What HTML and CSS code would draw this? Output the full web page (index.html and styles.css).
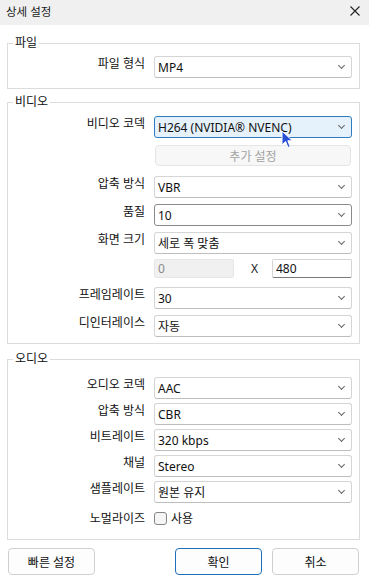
FILE: index.html
```html
<!DOCTYPE html>
<html lang="ko">

<head>
  <meta charset="UTF-8">
  <meta name="viewport" content="width=device-width, initial-scale=1.0">
  <title>상세 설정</title>
  <link rel="stylesheet" href="styles.css">
</head>

<body>
  <div class="window">
    <header class="titlebar">
      <span class="title">상세 설정</span>
      <svg class="close" width="10" height="10" viewBox="0 0 10 10">
        <path d="M0.5 0.5 L9.5 9.5 M9.5 0.5 L0.5 9.5" stroke="#222" stroke-width="1.1" fill="none" />
      </svg>
    </header>

    <!-- file -->
    <fieldset class="group group-file">
      <legend>파일</legend>
      <div class="rows">
        <label class="field-label">파일 형식</label>
        <div class="select"><span>MP4</span><i class="chevron"></i></div>
      </div>
    </fieldset>

    <!-- video -->
    <fieldset class="group group-video">
      <legend>비디오</legend>
      <div class="rows">
        <label class="field-label">비디오 코덱</label>
        <div class="select select-hot"><span>H264 (NVIDIA® NVENC)</span><i class="chevron"></i></div>

        <span></span>
        <button class="sub-button" disabled>추가 설정</button>

        <label class="field-label row-gap-lg">압축 방식</label>
        <div class="select row-gap-lg"><span>VBR</span><i class="chevron"></i></div>

        <label class="field-label">품질</label>
        <div class="select select-hover"><span>10</span><i class="chevron"></i></div>

        <label class="field-label">화면 크기</label>
        <div class="select"><span>세로 폭 맞춤</span><i class="chevron"></i></div>

        <span></span>
        <div class="size-row">
          <input class="text-input" type="text" value="0" disabled>
          <span class="times">X</span>
          <input class="text-input" type="text" value="480">
        </div>

        <label class="field-label row-gap-md">프레임레이트</label>
        <div class="select row-gap-md"><span>30</span><i class="chevron"></i></div>

        <label class="field-label">디인터레이스</label>
        <div class="select"><span>자동</span><i class="chevron"></i></div>
      </div>
    </fieldset>

    <!-- audio -->
    <fieldset class="group group-audio">
      <legend>오디오</legend>
      <div class="rows rows-tight">
        <label class="field-label">오디오 코덱</label>
        <div class="select"><span>AAC</span><i class="chevron"></i></div>

        <label class="field-label">압축 방식</label>
        <div class="select"><span>CBR</span><i class="chevron"></i></div>

        <label class="field-label">비트레이트</label>
        <div class="select"><span>320 kbps</span><i class="chevron"></i></div>

        <label class="field-label">채널</label>
        <div class="select"><span>Stereo</span><i class="chevron"></i></div>

        <label class="field-label">샘플레이트</label>
        <div class="select"><span>원본 유지</span><i class="chevron"></i></div>

        <label class="field-label check-label">노멀라이즈</label>
        <label class="check">
          <span class="box"></span>
          <span>사용</span>
        </label>
      </div>
    </fieldset>

    <footer class="buttons">
      <button class="btn">빠른 설정</button>
      <span class="spacer"></span>
      <button class="btn btn-default">확인</button>
      <button class="btn">취소</button>
    </footer>

    <svg class="cursor" width="13" height="19" viewBox="0 0 13 19">
      <path d="M1 1 L1 15 L4.5 11.5 L7 17.5 L9.2 16.6 L6.8 10.8 L11.5 10.8 Z" fill="#2b50d8" stroke="#fff" stroke-width="1" />
    </svg>
  </div>
</body>

</html>
```

FILE: styles.css
```css
body {
  margin: 0;
  background: #fff;
  font-family: "Noto Sans", "Noto Sans CJK KR", sans-serif;
  font-size: 12px;
  color: #111;
}

.window {
  position: relative;
  width: 369px;
  height: 581px;
  background: #fff;
}

/* title bar */
.titlebar {
  height: 25px;
  background: #f0f0f0;
  display: flex;
  align-items: center;
  justify-content: space-between;
  padding: 0 9px 0 6px;
  box-sizing: border-box;
}

.title {
  font-size: 11.5px;
  color: #1a1a1a;
  line-height: 14px;
  margin-top: -2px;
}

.close {
  margin-top: -4px;
}

/* groups */
.group {
  margin: 0 9px 0 7px;
  padding: 0;
  border: 1px solid #dcdcdc;
  min-width: 0;
}

.group legend {
  margin-left: 5px;
  padding: 0 2px;
  line-height: 14px;
  font-size: 12px;
  color: #111;
}

.group-file {
  margin-top: 11px;
  padding-top: 6px;
  padding-bottom: 10px;
}

.group-video {
  margin-top: 6px;
  padding-top: 7px;
  padding-bottom: 6px;
}

.group-audio {
  margin-top: 8px;
  padding-top: 11px;
  padding-bottom: 10px;
}

.rows {
  display: grid;
  grid-template-columns: 137px 198px;
  column-gap: 9px;
  row-gap: 6px;
}

.rows-tight {
  row-gap: 4px;
}

.row-gap-lg {
  margin-top: 4px;
}

.row-gap-md {
  margin-top: 3px;
}

.field-label {
  justify-self: end;
  line-height: 15px;
  white-space: nowrap;
}

.check-label {
  align-self: center;
}

/* combo box */
.select {
  height: 22px;
  box-sizing: border-box;
  border: 1px solid #d5d5d5;
  border-bottom-color: #bdbdbd;
  border-radius: 3px;
  background: #fff;
  display: flex;
  align-items: center;
  justify-content: space-between;
  padding: 0 7px 0 3px;
  white-space: nowrap;
}

.select-hot {
  border-color: #2f7bc2;
  background: #e5f1fb;
}

.select-hover {
  border-color: #8a8a8a;
}

.chevron {
  width: 4px;
  height: 4px;
  border-right: 1px solid #666;
  border-bottom: 1px solid #666;
  transform: rotate(45deg);
  margin-top: -3px;
}

.sub-button {
  margin: 1px 1px 0 1px;
  height: 21px;
  border: 1px solid #e5e5e5;
  border-radius: 4px;
  background: #f7f7f7;
  color: #a2a2a2;
  font: inherit;
  padding: 0;
}

.size-row {
  display: flex;
  align-items: center;
  justify-content: space-between;
  margin-top: -1px;
}

.text-input {
  width: 80px;
  height: 19px;
  box-sizing: border-box;
  border: 1px solid #d5d5d5;
  border-bottom-color: #7a7a7a;
  border-radius: 2px;
  padding: 0 3px;
  font: inherit;
  color: #111;
  background: #fff;
}

.text-input:disabled {
  background: #f0f0f0;
  border-color: #e6e6e6;
  color: #8a8a8a;
}

.times {
  color: #222;
  margin-left: 3px;
}

/* checkbox */
.check {
  display: flex;
  align-items: center;
  gap: 4px;
  height: 22px;
}

.box {
  width: 13px;
  height: 13px;
  box-sizing: border-box;
  border: 1px solid #858585;
  border-radius: 3px;
  background: #f5f5f5;
}

/* bottom buttons */
.buttons {
  display: flex;
  gap: 10px;
  margin: 8px 10px 0 8px;
}

.spacer {
  flex: 1;
}

.btn {
  width: 87px;
  height: 27px;
  border: 1px solid #d0d0d0;
  border-radius: 4px;
  background: #fdfdfd;
  font: inherit;
  color: #111;
  padding: 0;
}

.btn-default {
  border-color: #1f6fb8;
}

.cursor {
  position: absolute;
  left: 281px;
  top: 130px;
}
```
